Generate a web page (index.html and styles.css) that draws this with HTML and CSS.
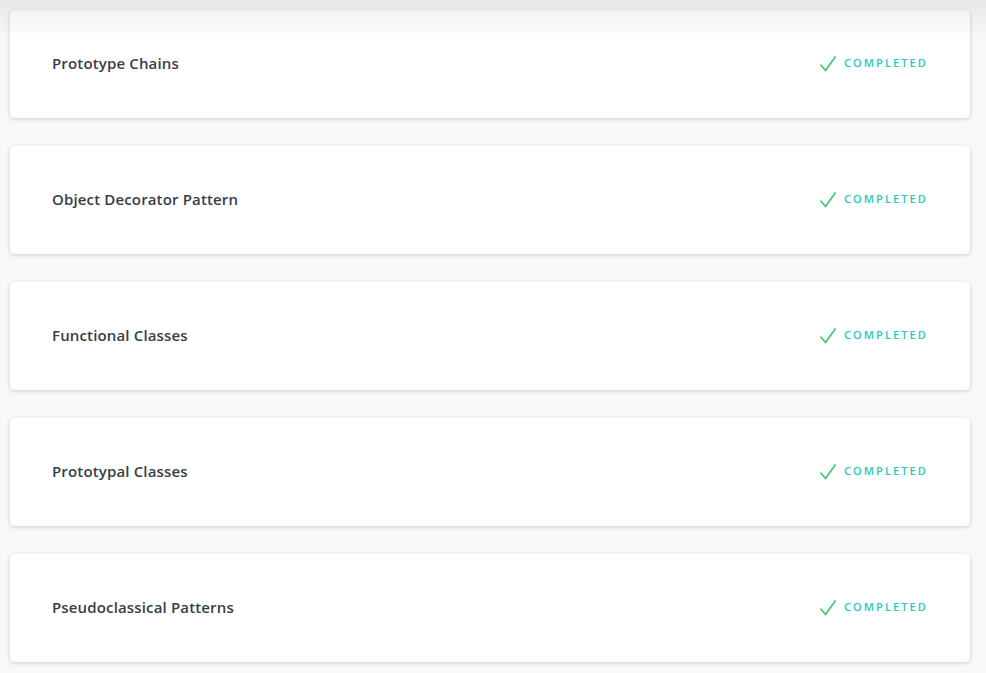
FILE: index.html
```html
<!DOCTYPE html>
<html lang="en">
<head>
<meta charset="utf-8">
<title>Lessons</title>
<link rel="stylesheet" href="styles.css">
</head>
<body>
<div class="top-shade"></div>
<main class="list">
  <div class="card">
    <span class="title">Prototype Chains</span>
    <span class="status"><svg class="check" viewBox="0 0 18 18" width="18" height="18"><path d="M1.5 9.5 L6.5 15.5 L16.5 1.5"/></svg>COMPLETED</span>
  </div>
  <div class="card">
    <span class="title">Object Decorator Pattern</span>
    <span class="status"><svg class="check" viewBox="0 0 18 18" width="18" height="18"><path d="M1.5 9.5 L6.5 15.5 L16.5 1.5"/></svg>COMPLETED</span>
  </div>
  <div class="card">
    <span class="title">Functional Classes</span>
    <span class="status"><svg class="check" viewBox="0 0 18 18" width="18" height="18"><path d="M1.5 9.5 L6.5 15.5 L16.5 1.5"/></svg>COMPLETED</span>
  </div>
  <div class="card">
    <span class="title">Prototypal Classes</span>
    <span class="status"><svg class="check" viewBox="0 0 18 18" width="18" height="18"><path d="M1.5 9.5 L6.5 15.5 L16.5 1.5"/></svg>COMPLETED</span>
  </div>
  <div class="card">
    <span class="title">Pseudoclassical Patterns</span>
    <span class="status"><svg class="check" viewBox="0 0 18 18" width="18" height="18"><path d="M1.5 9.5 L6.5 15.5 L16.5 1.5"/></svg>COMPLETED</span>
  </div>
</main>
</body>
</html>
```
FILE: styles.css
```css
html, body {
  margin: 0;
  padding: 0;
}
body {
  background: #f7f8fa;
  font-family: "Open Sans", "Noto Sans", sans-serif;
  position: relative;
  min-height: 673px;
}
.top-shade {
  position: absolute;
  left: 0;
  top: 0;
  right: 0;
  height: 40px;
  background: linear-gradient(to bottom, rgba(0, 0, 0, 0.07), rgba(0, 0, 0, 0));
  pointer-events: none;
  z-index: 2;
}
.list {
  display: flex;
  flex-direction: column;
  gap: 28px;
  padding: 10px 16px 0 10px;
}
.card {
  height: 108px;
  box-sizing: border-box;
  background: #fff;
  border-radius: 5px;
  box-shadow: 0 1px 4px rgba(0, 0, 0, 0.18);
  display: flex;
  align-items: center;
  justify-content: space-between;
  padding: 0 42px 0 42px;
}
.title {
  font-size: 15px;
  font-weight: 600;
  letter-spacing: 0.15px;
  color: #363e48;
  margin-top: -2px;
}
.status {
  display: flex;
  align-items: center;
  font-size: 11px;
  font-weight: 600;
  letter-spacing: 2.1px;
  color: #26c9b4;
  margin-top: -4px;
  margin-right: 0;
}
.check {
  fill: none;
  stroke: #2cc96e;
  stroke-width: 1.5;
  margin-right: 7px;
  margin-top: 3px;
}
```
